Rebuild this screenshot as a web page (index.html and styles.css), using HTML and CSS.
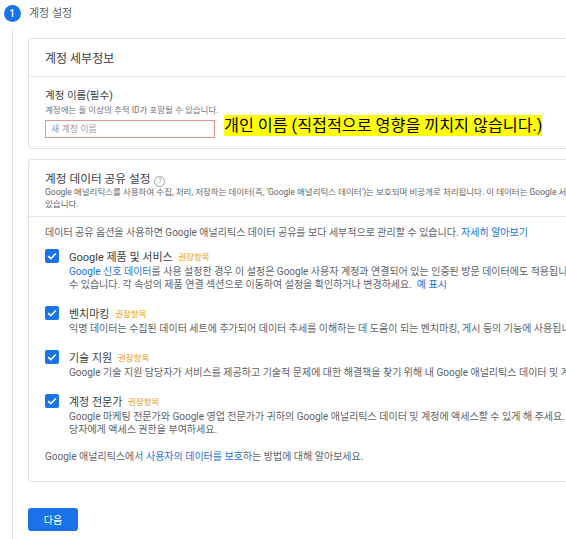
FILE: index.html
```html
<!DOCTYPE html>
<html lang="ko">
<head>
<meta charset="utf-8">
<link rel="stylesheet" href="styles.css">
</head>
<body>
<div class="page">
  <div class="rail">
    <div class="step-num">1</div>
    <div class="rail-line"></div>
  </div>
  <div class="content">
    <div class="step-title">계정 설정</div>

    <section class="card">
      <div class="card-head"><h2 class="card-title">계정 세부정보</h2></div>
      <div class="card-body name-body">
        <div class="field-label">계정 이름(필수)</div>
        <div class="field-hint">계정에는 둘 이상의 추적 ID가 포함될 수 있습니다.</div>
        <div class="field-row">
          <div class="input">새 계정 이름</div>
          <span class="note">개인 이름 (직접적으로 영향을 끼치지 않습니다.)</span>
        </div>
      </div>
    </section>

    <section class="card card-share">
      <div class="card-head share-head">
        <h2 class="card-title small">계정 데이터 공유 설정 <span class="help">?</span></h2>
        <p class="head-desc">Google 애널리틱스를 사용하여 수집, 처리, 저장하는 데이터(즉, 'Google 애널리틱스 데이터')는 보호되며 비공개로 처리됩니다. 이 데이터는 Google 서비스 유지 및 보호, 서비스 제공<br>있습니다.</p>
      </div>
      <div class="card-body share-body">
        <p class="intro">데이터 공유 옵션을 사용하면 Google 애널리틱스 데이터 공유를 보다 세부적으로 관리할 수 있습니다. <a class="link">자세히 알아보기</a></p>

        <div class="opt">
          <span class="check"><svg viewBox="0 0 14 14" width="14" height="14"><path d="M3.2 7.2l2.6 2.5 5-5.2" fill="none" stroke="#fff" stroke-width="1.6"/></svg></span>
          <div class="opt-text">
            <div class="opt-title">Google 제품 및 서비스 <span class="rec">권장항목</span></div>
            <div class="opt-desc"><a class="link">Google 신호 데이터</a>를 사용 설정한 경우 이 설정은 Google 사용자 계정과 연결되어 있는 인증된 방문 데이터에도 적용됩니다. 이 설정은<br>수 있습니다. 각 속성의 제품 연결 섹션으로 이동하여 설정을 확인하거나 변경하세요. &nbsp;<a class="link">예 표시</a></div>
          </div>
        </div>

        <div class="opt">
          <span class="check"><svg viewBox="0 0 14 14" width="14" height="14"><path d="M3.2 7.2l2.6 2.5 5-5.2" fill="none" stroke="#fff" stroke-width="1.6"/></svg></span>
          <div class="opt-text">
            <div class="opt-title">벤치마킹 <span class="rec">권장항목</span></div>
            <div class="opt-desc">익명 데이터는 수집된 데이터 세트에 추가되어 데이터 추세를 이해하는 데 도움이 되는 벤치마킹, 게시 등의 기능에 사용됩니다.</div>
          </div>
        </div>

        <div class="opt">
          <span class="check"><svg viewBox="0 0 14 14" width="14" height="14"><path d="M3.2 7.2l2.6 2.5 5-5.2" fill="none" stroke="#fff" stroke-width="1.6"/></svg></span>
          <div class="opt-text">
            <div class="opt-title">기술 지원 <span class="rec">권장항목</span></div>
            <div class="opt-desc">Google 기술 지원 담당자가 서비스를 제공하고 기술적 문제에 대한 해결책을 찾기 위해 내 Google 애널리틱스 데이터 및 계정에 액세스할 수 있게 해 주세요.</div>
          </div>
        </div>

        <div class="opt">
          <span class="check"><svg viewBox="0 0 14 14" width="14" height="14"><path d="M3.2 7.2l2.6 2.5 5-5.2" fill="none" stroke="#fff" stroke-width="1.6"/></svg></span>
          <div class="opt-text">
            <div class="opt-title">계정 전문가 <span class="rec">권장항목</span></div>
            <div class="opt-desc">Google 마케팅 전문가와 Google 영업 전문가가 귀하의 Google 애널리틱스 데이터 및 계정에 액세스할 수 있게 해 주세요. 성과 개선<br>당자에게 액세스 권한을 부여하세요.</div>
          </div>
        </div>

        <p class="outro">Google 애널리틱스에서 <a class="link">사용자의 데이터를 보호</a>하는 방법에 대해 알아보세요.</p>
      </div>
    </section>

    <div class="actions">
      <button class="btn">다음</button>
    </div>
  </div>
</div>
</body>
</html>
```

FILE: styles.css
```css
html, body {
  margin: 0;
  padding: 0;
  background: #fff;
  overflow: hidden;
}
body {
  font-family: Roboto, "Noto Sans CJK KR", sans-serif;
  color: #3c4043;
  width: 566px;
  height: 539px;
}
.page {
  display: flex;
  padding: 5px 0 0 3px;
  height: 534px;
}
.rail {
  width: 18px;
  flex: none;
  display: flex;
  flex-direction: column;
  align-items: center;
}
.step-num {
  width: 17px;
  height: 17px;
  border-radius: 50%;
  background: #1a73e8;
  color: #fff;
  font-size: 10px;
  font-weight: 500;
  display: flex;
  align-items: center;
  justify-content: center;
}
.rail-line {
  flex: 1;
  width: 1px;
  background: #e3e3e3;
  margin-top: 6px;
}
.content {
  margin-left: 7px;
  min-width: 620px;
}
.step-title {
  font-size: 11px;
  color: #5f6368;
  height: 17px;
  line-height: 17px;
  margin: 0 0 16px 1px;
}
.card {
  border: 1px solid #e0e0e0;
  border-right: none;
  border-radius: 4px 0 0 4px;
  white-space: nowrap;
}
.card-head {
  height: 37px;
  display: flex;
  align-items: center;
  padding: 0 16px;
  border-bottom: 1px solid #e8e8e8;
}
.card-title {
  margin: 0;
  font-size: 12px;
  font-weight: 400;
  color: #3c4043;
}
.card-title.small {
  font-size: 11.7px;
  line-height: 14px;
}
.card-body {
  padding: 0 16px;
}
.name-body {
  padding-top: 12px;
  padding-bottom: 10px;
}
.field-label {
  font-size: 10.5px;
  color: #3c4043;
  line-height: 14px;
}
.field-hint {
  font-size: 8.5px;
  color: #70757a;
  line-height: 12px;
  margin-top: 1px;
}
.field-row {
  display: flex;
  align-items: center;
  margin-top: 4px;
}
.input {
  width: 158px;
  height: 16px;
  border: 1px solid #e59890;
  padding: 0 5px;
  font-size: 9px;
  line-height: 16px;
  color: #9aa0a6;
}
.note {
  margin-left: 9px;
  background: #ffff00;
  color: #000;
  font-size: 16.2px;
  line-height: 21px;
  margin-top: -7px;
}
.card-share {
  margin-top: 10px;
}
.share-head {
  display: block;
  height: auto;
  padding: 12px 16px 6px;
}
.help {
  display: inline-block;
  width: 9px;
  height: 9px;
  border: 1px solid #9aa0a6;
  border-radius: 50%;
  font-size: 7px;
  line-height: 9px;
  text-align: center;
  color: #9aa0a6;
  vertical-align: 0;
  margin-left: 1px;
}
.head-desc {
  margin: -1px 0 0;
  font-size: 8.5px;
  line-height: 12px;
  color: #5f6368;
}
.share-body {
  padding-top: 9px;
  padding-bottom: 17px;
}
.intro {
  margin: 0;
  font-size: 10px;
  line-height: 14px;
  color: #5f6368;
}
.link {
  color: #1a73e8;
  text-decoration: none;
}
.opt {
  display: flex;
  margin-top: 10px;
}
.opt + .opt {
  margin-top: 16px;
}
.check {
  flex: none;
  width: 14px;
  height: 14px;
  background: #1a73e8;
  border-radius: 2px;
  display: flex;
  margin-top: -1px;
}
.opt-text {
  margin-left: 10px;
}
.opt-title {
  font-size: 11px;
  line-height: 14px;
  color: #3c4043;
}
.rec {
  font-size: 8.5px;
  color: #f29900;
  margin-left: 3px;
  vertical-align: 1px;
}
.opt-desc {
  font-size: 10px;
  line-height: 13px;
  color: #5f6368;
}
.outro {
  margin: 14px 0 0;
  font-size: 10px;
  line-height: 14px;
  color: #5f6368;
}
.actions {
  margin-top: 26px;
}
.btn {
  width: 50px;
  height: 23px;
  border: none;
  border-radius: 3px;
  background: #1a73e8;
  color: #fff;
  font-family: Roboto, "Noto Sans CJK KR", sans-serif;
  font-size: 10px;
  padding: 0;
}
```
